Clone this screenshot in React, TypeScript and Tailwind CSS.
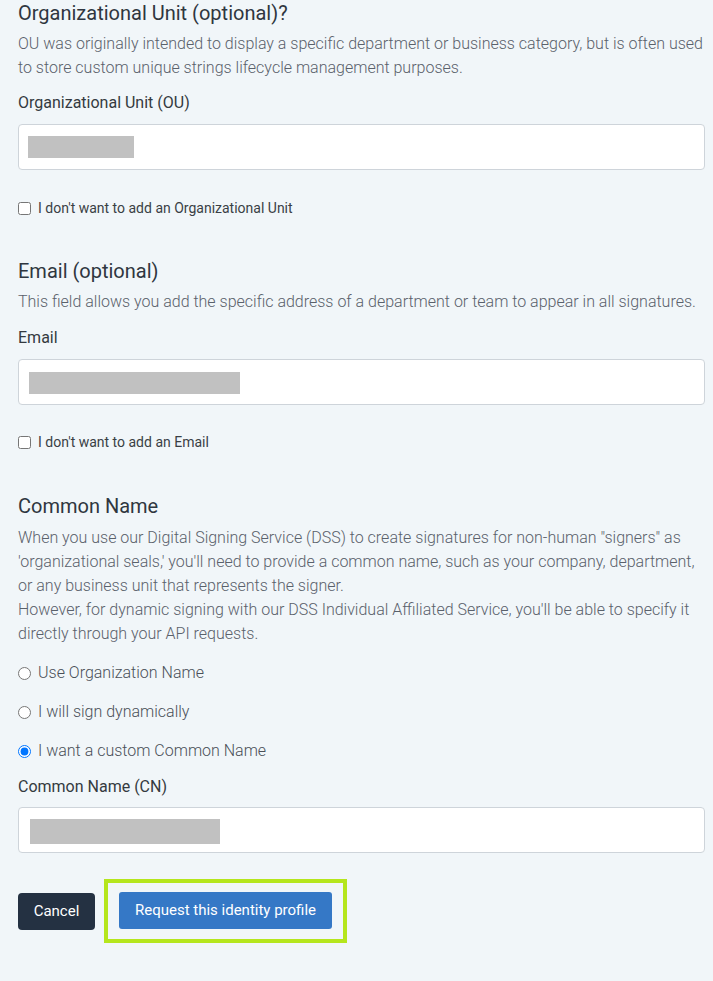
import React from "react";

const para = "text-[16px] leading-[24px] font-light text-[#5a616b]";
const heading = "text-[20px] leading-[24px] font-normal text-[#2f3640]";
const label = "text-[16px] leading-[24px] font-normal text-[#343a40]";

function Input({ barWidth, barLeft, barHeight, barTop }: { barWidth: number; barLeft: number; barHeight: number; barTop: number }) {
  return (
    <div className="h-[46px] w-full rounded-[4px] border border-[#ced4da] bg-white">
      <div
        className="bg-[#c1c1c1]"
        style={{ width: barWidth, height: barHeight, marginLeft: barLeft - 19, marginTop: barTop - 1 }}
      />
    </div>
  );
}

function Check({ text }: { text: string }) {
  return (
    <label className="flex items-center gap-[7px] text-[14px] leading-[20px] text-[#3a3f45]">
      <input type="checkbox" className="m-0 h-[13px] w-[13px]" />
      <span>{text}</span>
    </label>
  );
}

function Radio({ text, checked }: { text: string; checked?: boolean }) {
  return (
    <label className="flex items-center gap-[7px] text-[16px] leading-[24px] font-light text-[#4a5058]">
      <input type="radio" name="cn" defaultChecked={checked} className="m-0 h-[13px] w-[13px]" />
      <span>{text}</span>
    </label>
  );
}

export default function App() {
  return (
    <div
      className="min-h-[981px] w-full bg-[#f1f6f9] pl-[18px] pr-[8px] pt-[1px] pb-[38px]"
      style={{ fontFamily: "Roboto, 'Liberation Sans', sans-serif" }}
    >
      <h2 className={heading}>Organizational Unit (optional)?</h2>
      <p className={`${para} mt-[7px]`}>
        OU was originally intended to display a specific department or business category, but is often used to store custom unique strings lifecycle management purposes.
      </p>
      <div className={`${label} mt-[11px]`}>Organizational Unit (OU)</div>
      <div className="mt-[9px]">
        <Input barWidth={106} barLeft={28} barHeight={22} barTop={12} />
      </div>
      <div className="mt-[28px]">
        <Check text="I don't want to add an Organizational Unit" />
      </div>

      <h2 className={`${heading} mt-[41px]`}>Email (optional)</h2>
      <p className={`${para} mt-[7px]`}>
        This field allows you add the specific address of a department or team to appear in all signatures.
      </p>
      <div className={`${label} mt-[12px]`}>Email</div>
      <div className="mt-[9px]">
        <Input barWidth={211} barLeft={29} barHeight={22} barTop={13} />
      </div>
      <div className="mt-[27px]">
        <Check text="I don't want to add an Email" />
      </div>

      <h2 className={`${heading} mt-[42px]`}>Common Name</h2>
      <p className={`${para} mt-[8px]`}>
        When you use our Digital Signing Service (DSS) to create signatures for non-human "signers" as 'organizational seals,' you'll need to provide a common name, such as your company, department, or any business unit that represents the signer.
        <br />
        However, for dynamic signing with our DSS Individual Affiliated Service, you'll be able to specify it directly through your API requests.
      </p>
      <div className="mt-[15px] flex flex-col gap-[15px]">
        <Radio text="Use Organization Name" />
        <Radio text="I will sign dynamically" />
        <Radio text="I want a custom Common Name" checked />
      </div>
      <div className={`${label} mt-[12px]`}>Common Name (CN)</div>
      <div className="mt-[8px]">
        <Input barWidth={190} barLeft={30} barHeight={25} barTop={12} />
      </div>

      <div className="mt-[26px] flex items-center">
        <button className="h-[37px] w-[77px] rounded-[4px] bg-[#243142] text-[15px] font-normal text-white">
          Cancel
        </button>
        <div className="ml-[9px] border-[4px] border-[#b5e61d] px-[11px] pt-[9px] pb-[10px]">
          <button className="h-[37px] w-[213px] rounded-[3px] bg-[#3578c6] text-[15px] font-normal text-white">
            Request this identity profile
          </button>
        </div>
      </div>
    </div>
  );
}
